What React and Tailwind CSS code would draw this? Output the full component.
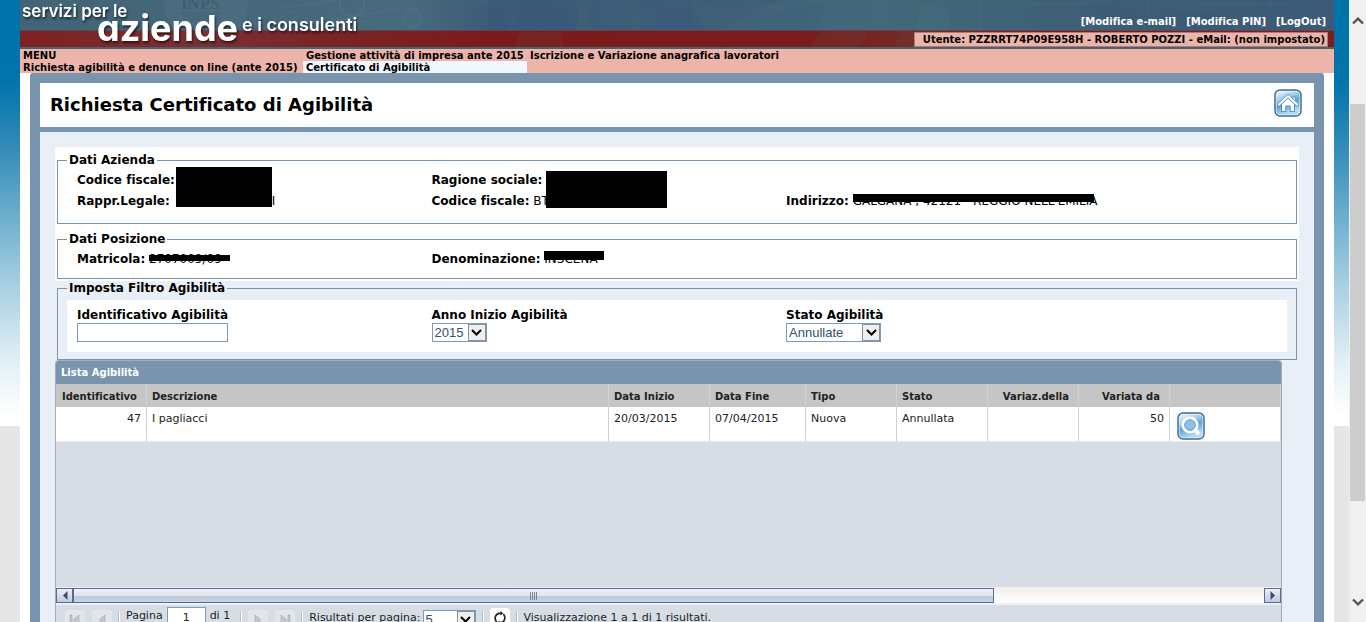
const columns = [
  { label: 'Identificativo', width: 'w-[91px]', align: 'right', value: '47' },
  { label: 'Descrizione', width: '', value: 'I pagliacci' },
  { label: 'Data Inizio', width: 'w-[101px]', value: '20/03/2015' },
  { label: 'Data Fine', width: 'w-[96px]', value: '07/04/2015' },
  { label: 'Tipo', width: 'w-[91px]', value: 'Nuova' },
  { label: 'Stato', width: 'w-[91px]', value: 'Annullata' },
  { label: 'Variaz.della', width: 'w-[91px]', align: 'right', value: '' },
  { label: 'Variata da', width: 'w-[91px]', align: 'right', value: '50' },
]

function SideStrip({ className }) {
  return (
    <div className={`flex shrink-0 flex-col bg-[#e6e6e6] ${className}`}>
      <div className="h-[426px] bg-[linear-gradient(#0072aa_0,#0074ab_80px,#328ab8_145px,#6fb0cf_220px,#a8cfe2_285px,#e0eff5_360px,#ffffff_415px)]" />
    </div>
  )
}

// Faded photo collage behind the logo
function BannerArt() {
  return (
    <svg className="absolute inset-0 h-full w-full" viewBox="0 0 1314 49" preserveAspectRatio="none" aria-hidden="true">
      <defs>
        <linearGradient id="sky" x1="0" x2="1" y1="0" y2="0">
          <stop offset="0" stopColor="#426477" />
          <stop offset="0.3" stopColor="#476a7d" />
          <stop offset="0.36" stopColor="#3d5a78" />
          <stop offset="0.55" stopColor="#3f5d78" />
          <stop offset="0.68" stopColor="#416878" />
          <stop offset="0.8" stopColor="#3e5f76" />
          <stop offset="1" stopColor="#3c5977" />
        </linearGradient>
        <linearGradient id="band" x1="0" x2="1" y1="0" y2="0">
          <stop offset="0" stopColor="#7d2220" />
          <stop offset="0.14" stopColor="#7b3033" />
          <stop offset="0.22" stopColor="#7a2627" />
          <stop offset="0.36" stopColor="#7b1b19" />
          <stop offset="0.6" stopColor="#7a1d1a" />
          <stop offset="0.68" stopColor="#762a25" />
          <stop offset="0.8" stopColor="#7b1c1a" />
          <stop offset="1" stopColor="#7c1d1b" />
        </linearGradient>
      </defs>
      <rect width="1314" height="49" fill="#44627a" />
      <rect width="1314" height="30" fill="url(#sky)" />
      <circle cx="186" cy="0" r="43" fill="#55758a" opacity="0.35" />
      <text x="161" y="9" fontSize="17" fontWeight="700" fill="#3c5b70" opacity="0.8" className="font-['Liberation_Serif',serif]">INPS</text>
      <path d="M162 13h40M165 16h34M163 19h38" stroke="#3c5b70" strokeWidth="1" opacity="0.6" />
      <path d="M250 0l16 8 50-8M268 10l30 14 80-16M300 0c10 22 30 26 50 20" stroke="#6b8798" strokeWidth="1" fill="none" opacity="0.25" />
      <circle cx="332" cy="4" r="12" fill="none" stroke="#6b8798" strokeWidth="2" opacity="0.25" />
      <circle cx="392" cy="18" r="9" fill="none" stroke="#6b8798" strokeWidth="2" opacity="0.2" />
      <path d="M452 0h16v5h90v25h12V6h46v10h-5v14h26V0h40v14l8 12h40V10h60V6H452z" fill="#4a6f78" opacity="0.22" />
      <path d="M470 4l12 4 6 22h-20zM500 0h55v30h-60zM618 0h55v30h-54z" fill="#39537a" opacity="0.25" />
      <path d="M740 30l30-26h40l-16 26zM1060 6l40-4 20 12 80-2 10 18h-110z" fill="#39537a" opacity="0.2" />
      <path d="M700 30l60-30h90l-40 30zM830 0h40v30h-60zM900 4l30 6v20h-34z" fill="#4a7780" opacity="0.2" />
      <path d="M888 2h12M888 8h12M910 6h10M910 12h10M890 14h10M1010 4h60M1180 4h90M960 0v30M1130 0l-6 30M1250 0v10" stroke="#577f8a" opacity="0.25" />
      <rect y="30" width="1314" height="1" fill="#5c4757" />
      <rect y="31" width="1314" height="16" fill="url(#band)" />
      <path d="M800 31h48l-8 16h-50zM880 33h30l-10 14h-25zM500 32h40l4 15h-50z" fill="#6f3a38" opacity="0.3" />
    </svg>
  )
}

function Logo() {
  return (
    <svg
      className="relative h-[49px] w-[350px] font-['Inter',sans-serif] [filter:drop-shadow(1px_2px_1px_rgba(0,0,0,0.6))]"
      viewBox="0 0 350 49"
      fill="#fff"
      role="img"
      aria-label="servizi per le aziende e i consulenti"
    >
      <text x="2" y="17" fontSize="17" fontWeight="600">servizi per le</text>
      <text x="77" y="41" fontSize="36" fontWeight="700" className="[font-feature-settings:'cv11']">aziende</text>
      <text x="222" y="31" fontSize="18" fontWeight="600">e i consulenti</text>
    </svg>
  )
}

function IconTile({ id, children }) {
  return (
    <svg className="block h-7 w-7" viewBox="0 0 28 28" aria-hidden="true">
      <defs>
        <linearGradient id={id} x1="0" y1="0" x2="0.4" y2="1">
          <stop offset="0" stopColor="#f2f8fd" />
          <stop offset="0.35" stopColor="#a9cfea" />
          <stop offset="0.6" stopColor="#5fa3d3" />
          <stop offset="1" stopColor="#b5dbf2" />
        </linearGradient>
      </defs>
      <rect x="1" y="1" width="26" height="26" rx="5" fill="#e8f3fa" stroke="#3d6f94" strokeWidth="1.5" />
      <rect x="2.5" y="2.5" width="23" height="23" rx="3.5" fill={`url(#${id})`} />
      {children}
    </svg>
  )
}

function HomeIcon() {
  return (
    <IconTile id="home-tile">
      <path d="M19 8h2.500v5H19z" fill="#fff" stroke="#4389c4" strokeWidth="0.8" />
      <path d="M7.500 14.500 14 8.500l6.500 6v8h-4.300V17h-4.400v5.500H7.500z" fill="#fff" stroke="#4389c4" strokeWidth="0.9" />
      <path d="M5 15.500 14 7l9 8.500" fill="none" stroke="#4389c4" strokeWidth="3.600" strokeLinecap="round" strokeLinejoin="round" />
      <path d="M5 15.500 14 7l9 8.500" fill="none" stroke="#fff" strokeWidth="2.200" strokeLinecap="round" strokeLinejoin="round" />
    </IconTile>
  )
}

function SearchIcon() {
  return (
    <IconTile id="search-tile">
      <path d="m17.500 17.500 4.500 4.500" stroke="#fff" strokeWidth="4" />
      <circle cx="13" cy="13" r="7" fill="#8fc0e6" stroke="#fff" strokeWidth="3" />
      <circle cx="13" cy="13" r="5.300" fill="none" stroke="#5b9fd6" strokeWidth="1" />
    </IconTile>
  )
}

function Field({ label, children }) {
  return (
    <div className="h-[21px] whitespace-nowrap leading-[21px]">
      <b>{label}</b> {children}
    </div>
  )
}

function Redacted({ text, bar }) {
  return (
    <span className="relative inline-block">
      {text}
      <span className={`absolute bg-black ${bar}`} />
    </span>
  )
}

function Box({ title, className, children }) {
  return (
    <fieldset className="mx-0.5 border border-[#7895ad]">
      <legend className="ml-[9px] px-0.5 font-bold leading-[15px]">{title}</legend>
      <div className={className}>{children}</div>
    </fieldset>
  )
}

function Chevron() {
  return (
    <svg className="h-[7px] w-[11px]" viewBox="0 0 11 7" fill="none" stroke="#000" strokeWidth="2">
      <path d="m1 1 4.500 4.500L10 1" />
    </svg>
  )
}

function Select({ id, options, className, ...props }) {
  return (
    <div className={`relative ${className}`}>
      <select id={id} className="block h-[19px] w-full appearance-none border border-[#7c9bb8] bg-white pl-0.5 font-['Liberation_Sans',Arial,sans-serif] text-[13px] leading-[17px] text-[#34506e]" {...props}>
        {options.map((o) => <option key={o}>{o}</option>)}
      </select>
      <span className="pointer-events-none absolute inset-y-px right-px flex w-[18px] items-center justify-center border border-[#8a8f94] bg-[#efefef]">
        <Chevron />
      </span>
    </div>
  )
}

function PageButton({ label, path }) {
  return (
    <button type="button" aria-label={label} disabled className="mt-[3px] flex h-5 w-5 items-center justify-center rounded-[3px] bg-[#e2e6ea]">
      <svg className="h-3 w-3" viewBox="0 0 12 12" fill="#c3c7cb" stroke="#a4a8ac" strokeWidth="0.6">
        <path d={path} />
      </svg>
    </button>
  )
}

function Separator() {
  return <span className="mx-1.5 mt-1 h-5 w-0.5 shrink-0 border-l border-[#b9bec4] bg-white" />
}

function ScrollButton({ label, path }) {
  return (
    <button type="button" aria-label={label} className="flex h-[15px] w-[17px] shrink-0 items-center justify-center border border-[#586a9c] bg-linear-to-b from-[#eceff4] to-[#c0cbdc]">
      <svg className="h-[9px] w-[6px]" viewBox="0 0 6 9" fill="#3f4c72"><path d={path} /></svg>
    </button>
  )
}

function HorizontalScroll() {
  return (
    <div className="flex border-t border-b-2 border-[#eef0f1] bg-linear-to-b from-[#f2f1ea] to-white">
      <ScrollButton label="Scorri a sinistra" path="M5.500 0v9L1 4.500z" />
      <div className="flex-1">
        <div className="flex h-[15px] w-[77.3%] items-center justify-center gap-px border border-[#586a9c] bg-[linear-gradient(#eceff4,#e0e4ec_50%,#b9c7d9_50%,#c9d6e3)]">
          {[0, 1, 2, 3].map((n) => <span key={n} className="h-2 w-px bg-[#7f8690]" />)}
        </div>
      </div>
      <ScrollButton label="Scorri a destra" path="M.5 0v9L5 4.500z" />
    </div>
  )
}

function ResultList() {
  return (
    <section className="mr-[17px] overflow-hidden rounded-t-[4px] border border-b-0 border-[#a3abb5] bg-[#d6dde4] text-[11px] text-[#222]">
      <h2 className="h-[23px] bg-[#7895ad] pl-[5px] text-[10px] font-bold leading-6 text-white">Lista Agibilità</h2>
      <table className="w-full table-fixed border-separate border-spacing-0">
        <thead>
          <tr className="bg-[#c5c5c5] text-[10px] leading-[15px]">
            {columns.map((c) => (
              <th key={c.label} className={`h-[23px] border-r border-[#d2d2d2] p-0 pt-0.5 font-bold ${c.width} ${c.align === 'right' ? 'pr-[9px] text-right' : 'pl-[5px] text-left'}`}>
                {c.label}
              </th>
            ))}
            <th className="w-[111px] border-r border-[#d2d2d2] p-0" aria-label="Azioni" />
          </tr>
        </thead>
        <tbody>
          <tr className="bg-white align-top">
            {columns.map((c) => (
              <td key={c.label} className={`h-[35px] border-r border-b border-[#d2d2d2] border-b-[#e8ebee] pt-1 leading-4 ${c.align === 'right' ? 'pr-[5px] text-right' : 'pl-[5px]'}`}>
                {c.value}
              </td>
            ))}
            <td className="border-r border-b border-[#d2d2d2] border-b-[#e8ebee] pl-[7px] pt-[5px]">
              <button type="button" aria-label="Visualizza dettaglio" className="block"><SearchIcon /></button>
            </td>
          </tr>
        </tbody>
      </table>
      <div className="h-[145px]" />
      <HorizontalScroll />
      <div className="flex h-8 items-start whitespace-nowrap pl-[9px] pt-0.5 leading-[18px]">
        <div className="flex gap-[7px]">
          <PageButton label="Prima pagina" path="M1 1h2v10H1zM10 1v10L4 6z" />
          <PageButton label="Pagina precedente" path="M9 1v10L3 6z" />
        </div>
        <Separator />
        <label htmlFor="pagina">Pagina</label>
        <input id="pagina" defaultValue="1" className="ml-1 h-5 w-[39px] border border-[#7c9bb8] bg-white text-center" />
        <span className="ml-1 mr-1">di&nbsp;1</span>
        <Separator />
        <div className="flex gap-[7px]">
          <PageButton label="Pagina successiva" path="M3 1v10l6-5z" />
          <PageButton label="Ultima pagina" path="M2 1v10l6-5zM9 1h2v10H9z" />
        </div>
        <Separator />
        <label htmlFor="righe" className="pt-0.5">Risultati per pagina:</label>
        <Select id="righe" options={['5', '10', '20']} className="ml-0.5 mt-[3px] w-[53px]" />
        <Separator />
        <button type="button" aria-label="Aggiorna" className="mt-px flex h-5 w-5 items-center justify-center rounded-[3px] bg-white">
          <svg className="h-[14px] w-[14px]" viewBox="0 0 14 14" fill="none" stroke="#222" strokeWidth="1.700">
            <path d="M3.700 10.800A5 5 0 0 1 6 2.300h2M10.300 3.200A5 5 0 0 1 8 11.700H6" />
            <path d="M7.500 0v4.600L10.300 2.300zM6.500 9.400V14L3.700 11.700z" fill="#222" stroke="none" />
          </svg>
        </button>
        <Separator />
        <span className="pt-0.5">Visualizzazione 1 a 1 di 1 risultati.</span>
      </div>
    </section>
  )
}

function Header() {
  return (
    <header className="relative flex h-[49px] justify-between text-[10px] font-bold">
      <BannerArt />
      <Logo />
      <div className="relative flex flex-col items-end whitespace-nowrap">
        <div className="mr-2 mt-[15px] flex gap-2.5 leading-[13px] text-white">
          <a href="#email">[Modifica e-mail]</a>
          <a href="#pin">[Modifica PIN]</a>
          <a href="#logout">[LogOut]</a>
        </div>
        <p className="mr-1.5 mt-1 border border-[#b07a74] bg-[#edb5aa] pl-2 pr-0.5 leading-[13px]">
          Utente: PZZRRT74P09E958H - ROBERTO POZZI - eMail: (non impostato)
        </p>
      </div>
    </header>
  )
}

function Menu() {
  return (
    <nav className="grid grid-cols-[283px_224px_1fr] whitespace-nowrap bg-[#edb5aa] text-[10px] font-bold leading-[13px] *:h-3 *:pl-[3px]">
      <span>MENU</span>
      <a href="#gestione">Gestione attività di impresa ante 2015</a>
      <a href="#iscrizione">Iscrizione e Variazione anagrafica lavoratori</a>
      <a href="#richiesta">Richiesta agibilità e denunce on line (ante 2015)</a>
      <a href="#certificato" className="bg-[#eff7ff]">Certificato di Agibilità</a>
    </nav>
  )
}

function PageScrollbar() {
  return (
    <div className="flex w-[17px] shrink-0 flex-col items-center justify-between bg-[#f0f0f0] pb-4 pt-[17px]" aria-hidden="true">
      <svg className="h-2 w-3" viewBox="0 0 12 8" fill="none" stroke="#555" strokeWidth="2.400"><path d="M1 6.500 6 1.700l5 4.800" /></svg>
      <div className="mb-[97px] mt-[79px] w-[15px] flex-1 bg-[#cdcdcd]" />
      <svg className="h-2 w-3" viewBox="0 0 12 8" fill="none" stroke="#555" strokeWidth="2.400"><path d="m1 1.500 5 4.800 5-4.800" /></svg>
    </div>
  )
}

export default function App() {
  return (
    <div className="flex h-screen overflow-hidden bg-white font-['DejaVu_Sans',Verdana,sans-serif] text-xs text-black [font-variant-ligatures:none]">
      <SideStrip className="w-5" />
      <div className="min-w-0 flex-1">
        <Header />
        <Menu />
        <main className="mx-2.5 rounded-t-[3px] border-10 border-[#7895ad] bg-[#e8eff7]">
          <div className="flex h-[49px] items-start justify-between border-b-5 border-[#7895ad] bg-white pl-2.5 pr-3">
            <h1 className="text-lg font-bold leading-[43px]">Richiesta Certificato di Agibilità</h1>
            <a href="#home" aria-label="Home" className="mt-1.5"><HomeIcon /></a>
          </div>
          <div className="px-[15px] pt-[15px]">
            <div className="flex flex-col gap-2 bg-white pb-0.5 pt-1.5">
              <Box title="Dati Azienda" className="grid grid-cols-[29.3%_29.3%_1fr] pb-[11px] pl-[19px] pr-[9px] pt-0.5">
                <div className="relative">
                  <Field label="Codice fiscale:" />
                  <Field label="Rappr.Legale:"><span className="inline-block w-[98px]" />I</Field>
                  <span className="absolute -top-[3px] left-[99px] h-10 w-24 bg-black" />
                </div>
                <div className="relative">
                  <Field label="Ragione sociale:" />
                  <Field label="Codice fiscale:">BT</Field>
                  <span className="absolute left-[114px] top-px h-[37px] w-[121px] bg-black" />
                </div>
                <div className="pt-[21px]">
                  <Field label="Indirizzo:">
                    <Redacted text="GALGANA , 42121 - REGGIO NELL'EMILIA" bar="top-[3px] left-0 right-1 h-2" />
                  </Field>
                </div>
              </Box>
              <Box title="Dati Posizione" className="grid grid-cols-[29.3%_29.3%_1fr] pb-2 pl-[19px] pr-[9px] pt-0.5">
                <Field label="Matricola:"><Redacted text="2707009/09" bar="top-1.5 left-0 -right-2 h-1.5" /></Field>
                <Field label="Denominazione:"><Redacted text="INSCENA" bar="top-0.5 left-0 -right-1.5 h-[9px]" /></Field>
              </Box>
            </div>
            <Box title="Imposta Filtro Agibilità" className="px-[9px] pb-[7px] pt-1">
              <div className="grid grid-cols-[29.3%_29.3%_1fr] bg-white pb-2.5 pl-2.5 pt-2 leading-[15px]">
                <div>
                  <label htmlFor="identificativo" className="block font-bold">Identificativo Agibilità</label>
                  <input id="identificativo" className="block h-[19px] w-[151px] border border-[#7c9bb8] bg-white px-0.5" />
                </div>
                <div>
                  <label htmlFor="anno" className="block font-bold">Anno Inizio Agibilità</label>
                  <Select id="anno" options={['2015', '2014', '2013']} className="w-[55px]" />
                </div>
                <div>
                  <label htmlFor="stato" className="block font-bold">Stato Agibilità</label>
                  <Select id="stato" options={['Annullate', 'Attive', 'Tutte']} className="w-[95px]" />
                </div>
              </div>
            </Box>
            <ResultList />
          </div>
        </main>
      </div>
      <SideStrip className="w-[15px]" />
      <PageScrollbar />
    </div>
  )
}
